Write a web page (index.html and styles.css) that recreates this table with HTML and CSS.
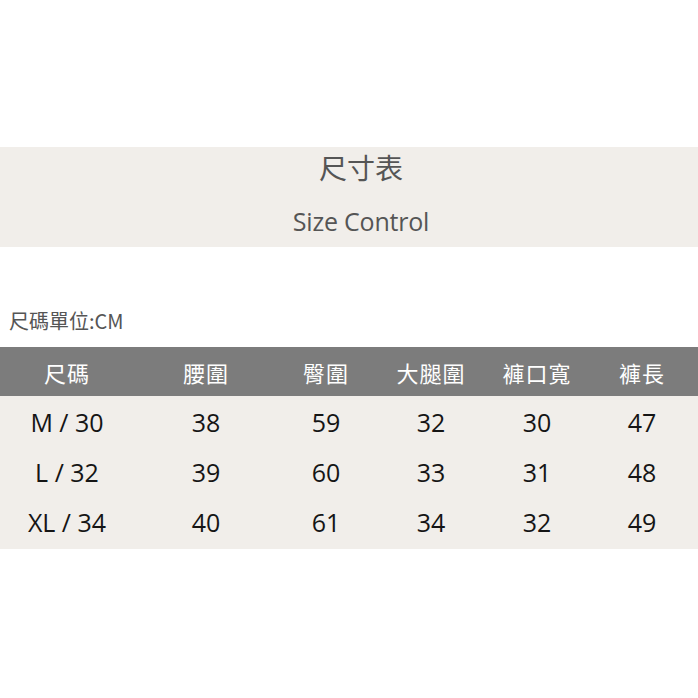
FILE: index.html
```html
<!DOCTYPE html>
<html lang="zh-Hant">
<head>
<meta charset="utf-8">
<link rel="stylesheet" href="styles.css">
</head>
<body>
<div class="page">
  <section class="title-band">
    <div class="title-zh">尺寸表</div>
    <div class="title-en">Size Control</div>
  </section>
  <div class="unit">尺碼單位:CM</div>
  <div class="table">
    <div class="row head">
      <div>尺碼</div><div>腰圍</div><div>臀圍</div><div>大腿圍</div><div>褲口寬</div><div>褲長</div>
    </div>
    <div class="body">
      <div class="row">
        <div>M / 30</div><div>38</div><div>59</div><div>32</div><div>30</div><div>47</div>
      </div>
      <div class="row">
        <div>L / 32</div><div>39</div><div>60</div><div>33</div><div>31</div><div>48</div>
      </div>
      <div class="row">
        <div>XL / 34</div><div>40</div><div>61</div><div>34</div><div>32</div><div>49</div>
      </div>
    </div>
  </div>
</div>
</body>
</html>
```
FILE: styles.css
```css
html, body {
  margin: 0;
  padding: 0;
  background: #ffffff;
}
.page {
  width: 698px;
  height: 698px;
  padding-top: 147px;
  box-sizing: border-box;
  font-family: "Open Sans", "Noto Sans CJK TC", sans-serif;
}
.title-band {
  height: 100px;
  box-sizing: border-box;
  padding-left: 24px;
  background: #f1eeea;
  display: flex;
  flex-direction: column;
  align-items: center;
  color: #555555;
}
.title-zh {
  font-family: "Noto Sans CJK TC", sans-serif;
  font-size: 28px;
  line-height: 40px;
  margin-top: 0;
  font-weight: 400;
}
.title-en {
  font-size: 25px;
  line-height: 30px;
  margin-top: 19px;
  letter-spacing: -0.2px;
}
.unit {
  margin-top: 61px;
  padding-left: 9px;
  height: 39px;
  font-family: "Noto Sans CJK TC", sans-serif;
  font-size: 20px;
  line-height: 26px;
  color: #555555;
}
.table {
  width: 698px;
}
.row {
  display: grid;
  grid-template-columns: 134px 144px 96px 114px 98px 112px;
  height: 50px;
  align-items: center;
  justify-items: center;
  font-size: 25px;
  color: #151515;
}
.row.head {
  height: 49px;
  background: #7c7c7c;
  color: #ffffff;
  font-family: "Noto Sans CJK TC", sans-serif;
  font-size: 22px;
  letter-spacing: 1px;
}
.body {
  background: #f1eeea;
  padding: 1px 0 2px;
}
```
